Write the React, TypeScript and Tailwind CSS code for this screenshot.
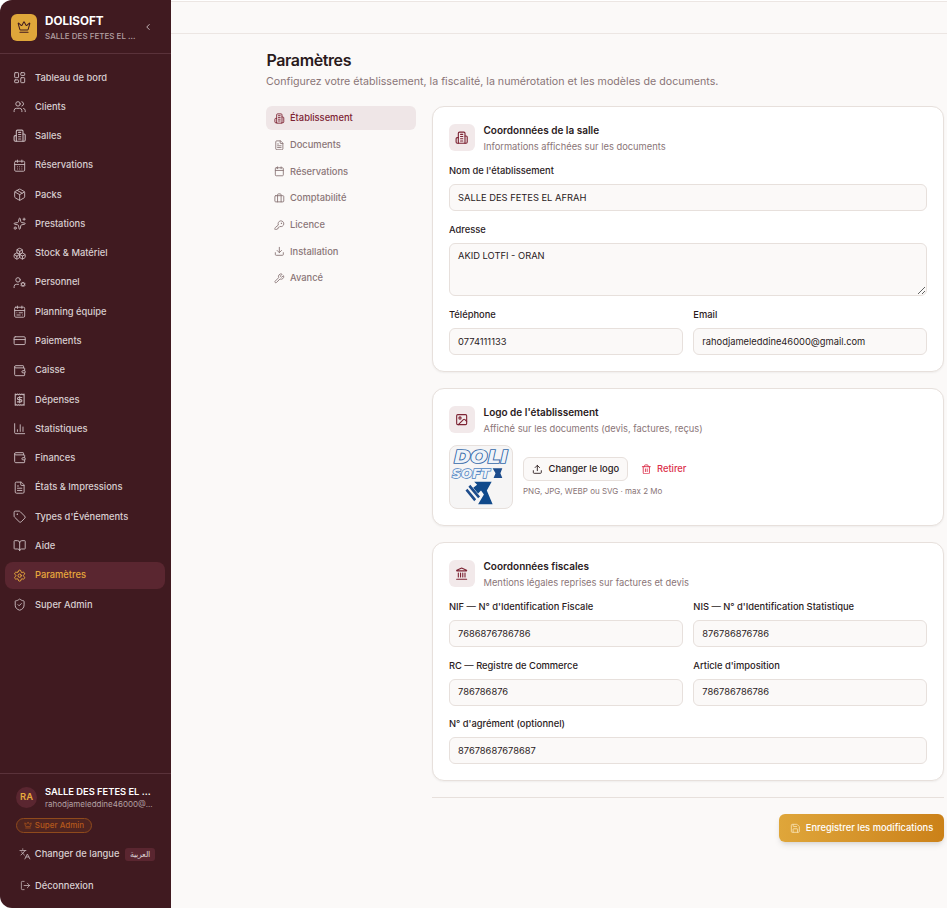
import { BookOpen, Boxes, CalendarDays, CalendarRange, ChartColumn, ChevronLeft, Crown, CreditCard, FileText, Image, KeyRound, Landmark, Languages, LayoutDashboard, LogOut, Package, Save, Settings, ShieldCheck, Sparkles, Tag, Trash2, Upload, UserCog, Users, Wallet, Calendar, Briefcase, Download, Wrench } from "lucide-react";
import type { ReactNode } from "react";

const font = "font-['Inter',sans-serif]";

function BuildingIcon({ className }: { className?: string }) {
  return (
    <svg viewBox="0 0 24 24" fill="none" stroke="currentColor" strokeWidth="2" strokeLinecap="round" strokeLinejoin="round" className={className}>
      <path d="M6 22V4a2 2 0 0 1 2-2h8a2 2 0 0 1 2 2v18Z" />
      <path d="M6 12H4a2 2 0 0 0-2 2v6a2 2 0 0 0 2 2h2" />
      <path d="M18 9h2a2 2 0 0 1 2 2v9a2 2 0 0 1-2 2h-2" />
      <path d="M10 6h4" />
      <path d="M10 10h4" />
      <path d="M10 14h4" />
      <path d="M10 18h4" />
    </svg>
  );
}

function ReceiptIcon({ className }: { className?: string }) {
  return (
    <svg viewBox="0 0 24 24" fill="none" stroke="currentColor" strokeWidth="2" strokeLinecap="round" strokeLinejoin="round" className={className}>
      <path d="M4 2v20l2-1 2 1 2-1 2 1 2-1 2 1 2-1 2 1V2l-2 1-2-1-2 1-2-1-2 1-2-1-2 1Z" />
      <path d="M16 8h-6a2 2 0 1 0 0 4h4a2 2 0 1 1 0 4H8" />
      <path d="M12 17.5v-11" />
    </svg>
  );
}

const navItems = [
  { label: "Tableau de bord", icon: LayoutDashboard },
  { label: "Clients", icon: Users },
  { label: "Salles", icon: BuildingIcon },
  { label: "Réservations", icon: CalendarDays },
  { label: "Packs", icon: Package },
  { label: "Prestations", icon: Sparkles },
  { label: "Stock & Matériel", icon: Boxes },
  { label: "Personnel", icon: UserCog },
  { label: "Planning équipe", icon: CalendarRange },
  { label: "Paiements", icon: CreditCard },
  { label: "Caisse", icon: Wallet },
  { label: "Dépenses", icon: ReceiptIcon },
  { label: "Statistiques", icon: ChartColumn },
  { label: "Finances", icon: Wallet },
  { label: "États & Impressions", icon: FileText },
  { label: "Types d'Événements", icon: Tag },
  { label: "Aide", icon: BookOpen },
  { label: "Paramètres", icon: Settings, active: true },
  { label: "Super Admin", icon: ShieldCheck },
];

const tabs = [
  { label: "Établissement", icon: BuildingIcon, active: true },
  { label: "Documents", icon: FileText },
  { label: "Réservations", icon: Calendar },
  { label: "Comptabilité", icon: Briefcase },
  { label: "Licence", icon: KeyRound },
  { label: "Installation", icon: Download },
  { label: "Avancé", icon: Wrench },
];

function Sidebar() {
  return (
    <aside className="w-[171px] shrink-0 h-[908px] bg-[#401a20] rounded-l-xl flex flex-col">
      <div className="h-[54px] shrink-0 border-b border-[#5a323a] flex items-center pl-[11px] pr-[18px] pt-[1px]">
        <div className="w-[26px] h-[27px] rounded-md bg-[#dfa63a] flex items-center justify-center text-[#401a20]">
          <Crown className="w-[14px] h-[14px]" strokeWidth={1.75} />
        </div>
        <div className="ml-2 flex-1 min-w-0 pt-[1px]">
          <div className="text-[11.67px] leading-[14px] font-bold text-white">DOLISOFT</div>
          <div className="text-[8px] leading-[12px] font-medium text-[#b3a0a3] mt-[2px] whitespace-nowrap">SALLE DES FETES EL ...</div>
        </div>
        <ChevronLeft className="w-[10px] h-[10px] text-[#d9cfd1]" strokeWidth={2} />
      </div>
      <nav className="flex flex-col gap-[2.29px] pl-[5px] pr-[6px] pt-[10px]">
        {navItems.map((item) => (
          <div key={item.label} className={`h-[27px] rounded-lg flex items-center pl-[8px] gap-[8.67px] text-[9.33px] font-medium ${item.active ? "bg-[#5a2630] text-[#e8a93c]" : "text-[#d9cfd1]"}`}>
            <item.icon className={`w-[13.33px] h-[13.33px] shrink-0 ${item.active ? "text-[#e8a93c]" : "text-[#c4b5b8]"}`} strokeWidth={1.75} />
            <span>{item.label}</span>
          </div>
        ))}
      </nav>
      <div className="mt-auto border-t border-[#5a323a] pt-[10.5px] px-4 pb-[16px]">
        <div className="flex items-center gap-[8px]">
          <div className="w-[21px] h-[21px] rounded-full bg-[#5a2630] text-[#e8a93c] text-[9.33px] font-semibold flex items-center justify-center shrink-0">RA</div>
          <div className="min-w-0">
            <div className="text-[9.33px] leading-[13px] font-semibold text-white whitespace-nowrap">SALLE DES FETES EL ...</div>
            <div className="text-[8px] leading-[12px] text-[#b3a0a3] whitespace-nowrap">rahodjameleddine46000@...</div>
          </div>
        </div>
        <div className="mt-[8px] w-[76px] h-[15px] rounded-full border border-[#8f4a1c] bg-[#4f2420] text-[#b5591c] text-[8px] font-medium flex items-center justify-center gap-[3px]">
          <Crown className="w-[8px] h-[8px]" strokeWidth={2} />
          Super Admin
        </div>
        <div className="mt-[15px] h-[13px] flex items-center text-[9.33px] font-medium text-[#d9cfd1] whitespace-nowrap">
          <Languages className="w-[12px] h-[12px] ml-[3px] mr-[4px] text-[#c4b5b8]" strokeWidth={1.75} />
          <span>Changer de langue</span>
          <span className="ml-[6px] h-[13px] w-[30px] justify-center rounded-[3px] bg-[#5a2630] text-[8px] flex items-center font-['Noto_Sans',sans-serif]">العربية</span>
        </div>
        <div className="mt-[18.5px] h-[13px] flex items-center text-[9.33px] font-medium text-[#d9cfd1]">
          <LogOut className="w-[11px] h-[11px] ml-[4px] mr-[4px] text-[#c4b5b8]" strokeWidth={1.75} />
          <span>Déconnexion</span>
        </div>
      </div>
    </aside>
  );
}

function Field({ label, value, className }: { label: string; value: string; className?: string }) {
  return (
    <div className={className}>
      <div className="text-[9.33px] leading-[13px] font-medium text-[#2a1a1c]">{label}</div>
      <div className="mt-[7px] h-[27px] rounded-md border border-[#e7e0dc] bg-[#fbf9f8] px-[8px] flex items-center text-[9.33px] text-[#2a1a1c]">{value}</div>
    </div>
  );
}

function Card({ icon, title, subtitle, children }: { icon: ReactNode; title: string; subtitle: string; children: ReactNode }) {
  return (
    <section className="bg-white border border-[#e7e0dc] rounded-xl px-4 pt-4 pb-4 shadow-xs">
      <div className="flex items-center gap-[8.5px]">
        <div className="w-[26px] h-[27px] rounded-md bg-[#f2e9ea] flex items-center justify-center text-[#7d2333]">{icon}</div>
        <div>
          <div className="text-[10px] leading-[14px] font-semibold text-[#2a1a1c]">{title}</div>
          <div className="text-[9.33px] leading-[13px] text-[#8a7577] mt-[2.5px]">{subtitle}</div>
        </div>
      </div>
      {children}
    </section>
  );
}

function LogoImage() {
  return (
    <svg viewBox="0 0 64 64" className="w-full h-full">
      <text x="4" y="18" fontFamily="DejaVu Sans, sans-serif" fontWeight="700" fontStyle="italic" fontSize="19" fill="#eef3f9" stroke="#3468a8" strokeWidth="1.8" paintOrder="stroke" textLength="56" lengthAdjust="spacingAndGlyphs">DOLI</text>
      <text x="2" y="33" fontFamily="DejaVu Sans, sans-serif" fontWeight="700" fontStyle="italic" fontSize="13" fill="#eef3f9" stroke="#4a7fc0" strokeWidth="1.5" paintOrder="stroke" textLength="39" lengthAdjust="spacingAndGlyphs">SOFT</text>
      <path d="M44 23h10l-2 5 2 5H45l2-5z" fill="#1d4c8c" />
      <path d="M16 46l2-2 9 11-2 2zM19 42l2-2 10 12-2 2z" fill="#1d4c8c" />
      <path d="M25 37h18l-5 9 6 14H29l6-10-3-4-3 3-5-6 4-3z" fill="#114a8b" />
    </svg>
  );
}

export default function App() {
  return (
    <div className={`${font} flex w-[947px] h-[908px] overflow-hidden bg-white`}>
      <Sidebar />
      <div className="flex-1 min-w-0 mt-[1px] bg-[#fbf9f8] flex flex-col">
        <header className="h-[33px] shrink-0 border-y border-[#ece6e3]" />
        <main className="pl-[95px] pr-[3px] pt-[16px]">
          <h1 className="text-[16px] leading-[20px] font-semibold tracking-tight text-[#2a1a1c] pl-[0.5px]">Paramètres</h1>
          <p className="text-[10.67px] leading-[14px] text-[#8a7577] mt-[5px]">Configurez votre établissement, la fiscalité, la numérotation et les modèles de documents.</p>
          <div className="flex gap-4 mt-[17px]">
            <div className="w-[150px] shrink-0 flex flex-col gap-[2.67px] pt-[0.25px]">
              {tabs.map((tab) => (
                <div key={tab.label} className={`h-[24px] rounded-md flex items-center pl-[8px] gap-[5.33px] text-[9.33px] font-medium ${tab.active ? "bg-[#efe6e7] text-[#7d2333]" : "text-[#8a7577]"}`}>
                  <tab.icon className="w-[10.67px] h-[10.67px] shrink-0" strokeWidth={2} />
                  <span>{tab.label}</span>
                </div>
              ))}
            </div>
            <div className="w-[512px] flex flex-col gap-4">
              <Card icon={<BuildingIcon className="w-[13.33px] h-[13.33px]" />} title="Coordonnées de la salle" subtitle="Informations affichées sur les documents">
                <Field className="mt-[11.5px]" label="Nom de l'établissement" value="SALLE DES FETES EL AFRAH" />
                <div className="mt-[12px] text-[9.33px] leading-[13px] font-medium text-[#2a1a1c]">Adresse</div>
                <textarea readOnly value="AKID LOTFI - ORAN" className="block mt-[7px] w-full h-[53px] rounded-md border border-[#e7e0dc] bg-[#fbf9f8] px-[8px] py-[5px] text-[9.33px] text-[#2a1a1c] outline-none" />
                <div className="grid grid-cols-2 gap-[10.67px] mt-[12px]">
                  <Field label="Téléphone" value="0774111133" />
                  <Field label="Email" value="rahodjameleddine46000@gmail.com" />
                </div>
              </Card>
              <Card icon={<Image className="w-[13.33px] h-[13.33px]" strokeWidth={2} />} title="Logo de l'établissement" subtitle="Affiché sur les documents (devis, factures, reçus)">
                <div className="flex items-center gap-[10px] mt-[10.5px]">
                  <div className="w-[64px] h-[64px] rounded-lg border border-[#e7e0dc] bg-[#f6f5f5] overflow-hidden">
                    <LogoImage />
                  </div>
                  <div>
                    <div className="flex items-center gap-[13px]">
                      <div className="h-[24px] w-[105px] rounded-md border border-[#e7e0dc] bg-[#fbf9f8] flex items-center justify-center gap-[6px] text-[9.33px] font-medium text-[#2a1a1c]">
                        <Upload className="w-[10.67px] h-[10.67px]" strokeWidth={2} />
                        Changer le logo
                      </div>
                      <div className="flex items-center gap-[5.33px] text-[9.33px] font-medium text-[#dc2f4a]">
                        <Trash2 className="w-[10.67px] h-[10.67px]" strokeWidth={2} />
                        Retirer
                      </div>
                    </div>
                    <div className="mt-[4px] text-[8px] leading-[12px] text-[#8a7577]">PNG, JPG, WEBP ou SVG · max 2 Mo</div>
                  </div>
                </div>
              </Card>
              <Card icon={<Landmark className="w-[13.33px] h-[13.33px]" strokeWidth={2} />} title="Coordonnées fiscales" subtitle="Mentions légales reprises sur factures et devis">
                <div className="grid grid-cols-2 gap-x-[10.67px] gap-y-[11.67px] mt-[11.5px]">
                  <Field label="NIF — N° d'Identification Fiscale" value="7686876786786" />
                  <Field label="NIS — N° d'Identification Statistique" value="876786876786" />
                  <Field label="RC — Registre de Commerce" value="786786876" />
                  <Field label="Article d'imposition" value="786786786786" />
                  <Field className="col-span-2" label="N° d'agrément (optionnel)" value="87678687678687" />
                </div>
              </Card>
              <div className="border-t border-[#e7e0dc] pt-4 flex justify-end">
                <div className="h-[28px] w-[165px] rounded-md bg-gradient-to-r from-[#dfa63a] to-[#cb8118] shadow-md flex items-center justify-center gap-[5.33px] text-[9.33px] font-medium text-white">
                  <Save className="w-[10.67px] h-[10.67px] text-[#f7dfae]" strokeWidth={2} />
                  Enregistrer les modifications
                </div>
              </div>
            </div>
          </div>
        </main>
      </div>
    </div>
  );
}
